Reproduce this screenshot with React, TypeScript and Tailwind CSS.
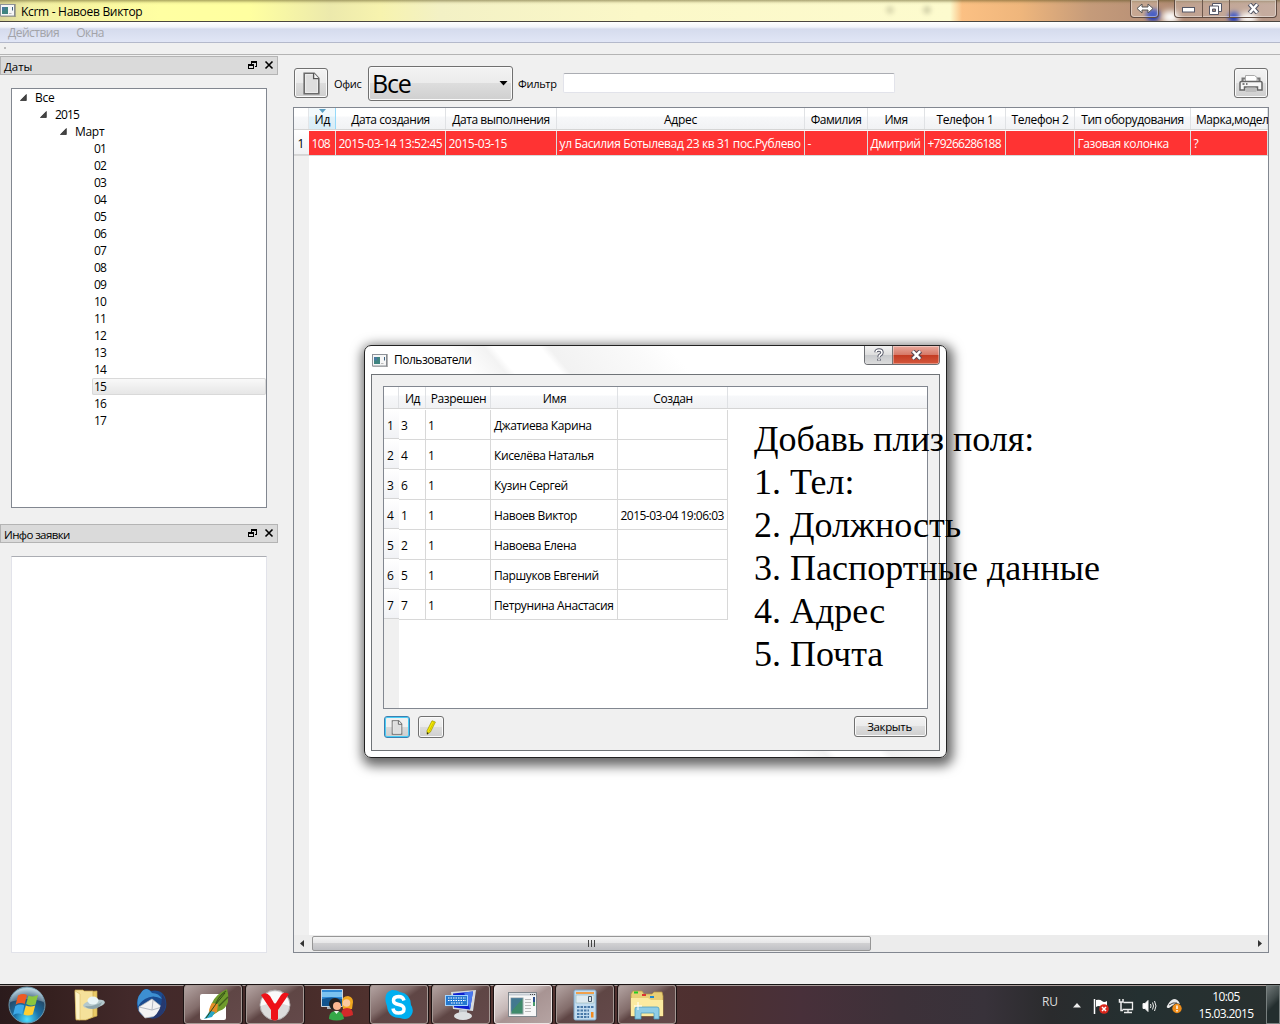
import React from "react";

const days = ["01", "02", "03", "04", "05", "06", "07", "08", "09", "10", "11", "12", "13", "14", "15", "16", "17"];

const orderCols = [
  { w: "w-[27px]", head: "Ид", cell: "108", ht: "pl-px", ct: "tracking-[-0.7px]" },
  { w: "w-[110px]", head: "Дата создания", cell: "2015-03-14 13:52:45", ht: "tracking-[-0.45px]", ct: "tracking-[-0.5px]" },
  { w: "w-[111px]", head: "Дата выполнения", cell: "2015-03-15", ht: "tracking-[-0.45px]", ct: "tracking-[-0.42px]" },
  { w: "w-[248px]", head: "Адрес", cell: "ул Басилия Ботылевад 23 кв 31 пос.Рублево", ht: "tracking-[-0.3px]", ct: "tracking-[-0.36px]" },
  { w: "w-[63px]", head: "Фамилия", cell: "-", ht: "tracking-[-0.45px]", ct: "" },
  { w: "w-[57px]", head: "Имя", cell: "Дмитрий", ht: "tracking-[-0.45px]", ct: "tracking-[-0.4px]" },
  { w: "w-[81px]", head: "Телефон 1", cell: "+79266286188", ht: "tracking-[-0.35px]", ct: "tracking-[-0.75px]" },
  { w: "w-[69px]", head: "Телефон 2", cell: "", ht: "tracking-[-0.35px]", ct: "" },
  { w: "w-[116px]", head: "Тип оборудования", cell: "Газовая колонка", ht: "tracking-[-0.42px]", ct: "tracking-[-0.4px]" },
  { w: "w-[77px]", head: "Марка,модел", cell: "?", ht: "tracking-[-0.45px] pl-[5px]", ct: "" },
];

const users = [
  ["3", "Джатиева Карина", ""],
  ["4", "Киселёва Наталья", ""],
  ["6", "Кузин Сергей", ""],
  ["1", "Навоев Виктор", "2015-03-04 19:06:03"],
  ["2", "Навоева Елена", ""],
  ["5", "Паршуков Евгений", ""],
  ["7", "Петрунина Анастасия", ""],
];

const note = ["Добавь плиз поля:", "1. Тел:", "2. Должность", "3. Паспортные данные", "4. Адрес", "5. Почта"];

const HEAD_BG = "bg-[linear-gradient(#fff_0%,#fff_40%,#f7f8fa_41%,#f1f2f4_100%)]";
const BTN =
  "flex items-center justify-center rounded-[3px] border border-[#707070] bg-[linear-gradient(#f3f3f3_0%,#ebebeb_49%,#dddddd_50%,#cfcfcf_100%)] shadow-[inset_0_0_0_1px_#fafafa]";

function AppIcon() {
  return (
    <svg width="16" height="13" viewBox="0 0 16 13" className="shrink-0">
      <rect x="0.5" y="0.5" width="14" height="11.5" fill="#f6f6f6" stroke="#8d9299" />
      <path d="M15.2 0V13H1" fill="none" stroke="#777" strokeWidth="0.8" />
      <rect x="2" y="3" width="6" height="7" fill="#3f8480" />
      <rect x="2" y="3" width="3" height="3.5" fill="#4778a0" />
      <path d="M9 9.500h2.500" stroke="#bbb" />
      <path d="M12.500 3v3.500" stroke="#3c6180" />
    </svg>
  );
}

function PageIcon({ w, h }: { w: number; h: number }) {
  return (
    <svg width={w} height={h} viewBox="0 0 17 23">
      <path d="M1.2 1.2h10l4.6 5v15.6H1.2z" fill="#dedede" stroke="#6c6c6c" strokeWidth="1.6" />
      <path d="M2.6 2.6h8v4.5h3.8v13.3H2.6z" fill="none" stroke="#ededed" />
      <path d="M10.6 1v5.6h5.2" fill="#f7f7f7" stroke="#555" strokeWidth="1.3" />
    </svg>
  );
}

function DockTitle({ text, track }: { text: string; track: string }) {
  return (
    <div className="flex h-[19px] w-[278px] items-center border border-[#b4b4b4] bg-[#dadada] pl-[3px] pr-[3px] text-[11.5px] text-black">
      <span className={"relative top-px flex-1 leading-[16px] " + track}>{text}</span>
      <svg width="26" height="11" viewBox="0 0 26 11" fill="none" stroke="#000" shapeRendering="crispEdges">
        <path d="M3.5 4.500v-3h5v5h-2M3 2.500h6" />
        <path d="M0.500 4.500h5v4h-5zM0 5.500h6" />
        <path d="M17.5 1.5l7 7M24.5 1.5l-7 7" strokeWidth="1.6" shapeRendering="auto" />
      </svg>
    </div>
  );
}

function Expander() {
  return (
    <svg width="7" height="7" viewBox="0 0 7 7" className="shrink-0">
      <path d="M6.3 0.5v6H0.4z" fill="#444" stroke="#222" strokeWidth="0.7" />
    </svg>
  );
}

function TreePanel() {
  return (
    <div className="ml-[11px] mt-[13px] h-[420px] w-[256px] border border-[#828790] bg-white text-[12px] leading-[17px] tracking-[-0.3px]">
      <div className="flex h-[17px] items-center gap-[8px] pl-[8px]"><Expander /><span>Все</span></div>
      <div className="flex h-[17px] items-center gap-[8px] pl-[28px]"><Expander /><span className="tracking-[-0.9px]">2015</span></div>
      <div className="flex h-[17px] items-center gap-[8px] pl-[48px]"><Expander /><span>Март</span></div>
      {days.map((d) => (
        <div
          key={d}
          className={
            "ml-[80px] h-[17px] rounded-[2px] pl-[2px] tracking-[-0.9px] " +
            (d === "15" ? "bg-[linear-gradient(#fafafa,#e5e5e5)] shadow-[inset_0_0_0_1px_#d9d9d9]" : "")
          }
        >
          {d}
        </div>
      ))}
    </div>
  );
}

function Toolbar() {
  return (
    <div className="flex h-[52px] items-center pl-[294px] pr-[12px] pt-[4px] text-[11px]">
      <div className={BTN + " h-[30px] w-[34px]"}><PageIcon w={17} h={23} /></div>
      <span className="relative top-[1px] ml-[6px] w-[34px] tracking-[-0.3px]">Офис</span>
      <div className={BTN + " mt-px h-[35px] w-[145px] !justify-between pl-[3px] pr-[4px]"}>
        <span className="relative -top-px text-[25px] leading-[30px] tracking-[-1.2px]">Все</span>
        <svg width="9" height="5" viewBox="0 0 9 5"><path d="M0.5 0h8L4.5 4.6z" fill="#000" /></svg>
      </div>
      <span className="relative top-[1px] ml-[5px] w-[45px] tracking-[-0.3px]">Фильтр</span>
      <div className="h-[20px] w-[332px] rounded-[2px] border border-[#e2e3ea] border-t-[#abadb3] bg-white" />
      <div className="flex-1" />
      <div className={BTN + " h-[30px] w-[34px]"}>
        <svg width="24" height="19" viewBox="0 0 24 19">
          <path d="M3.5 9V4.5h17V9" fill="none" stroke="#777" strokeWidth="2" />
          <path d="M6.5 7.5v-6h9l2.5 2v4z" fill="#fff" stroke="#aaa" />
          <path d="M1 8.5q0-1 1.5-1h19q1.500 0 1.500 1V16h-4.500v-3h-13v3H1z" fill="#f7f7f7" stroke="#666" strokeWidth="1.5" />
          <path d="M3.5 10h2M7 10h1.5" stroke="#555" strokeWidth="1.5" />
          <path d="M7.5 13.5h9l1 4.5h-11z" fill="#bcbcbc" />
        </svg>
      </div>
    </div>
  );
}

function OrdersTable() {
  return (
    <div className="ml-[15px] flex h-[846px] w-[976px] flex-col overflow-hidden border border-[#828790] bg-white text-[12px]">
      <div className="flex h-[22px] shrink-0 border-b border-[#d5d5d5]">
        <div className={"w-[15px] shrink-0 border-r border-[#e3e5e8] " + HEAD_BG} />
        {orderCols.map((c, i) => (
          <div
            key={c.head}
            className={
              "relative flex shrink-0 items-center whitespace-nowrap border-r pt-[2px] leading-[16px] " +
              c.w + " " + c.ht + " " +
              (i === 9 ? "" : "justify-center ") +
              (i === 0 ? "border-[#96d9f9] bg-[linear-gradient(#f2f9fc_40%,#e1f1f9_41%,#d8ecf6)]" : "border-[#e0e2e5] " + HEAD_BG)
            }
          >
            {i === 0 && (
              <svg className="absolute left-[10px] top-[1px]" width="7" height="4" viewBox="0 0 7 4"><path d="M0 0h7L3.5 4z" fill="#5c9fc2" /></svg>
            )}
            {c.head}
          </div>
        ))}
      </div>
      <div className="flex h-[25px] shrink-0 pt-px">
        <div className="w-[15px] shrink-0 border-b border-[#d5d5d5] bg-[linear-gradient(#fff,#f1f2f4)] pr-px text-center leading-[26px]">1</div>
        {orderCols.map((c) => (
          <div
            key={c.head}
            className={"shrink-0 overflow-hidden whitespace-nowrap border-r border-[#dcdcdc] bg-[#ff3333] pl-[2.5px] leading-[26px] text-white " + c.w + " " + c.ct}
          >
            {c.cell}
          </div>
        ))}
      </div>
      <div className="flex-1 border-t border-[#d8d8d8] bg-white"><div className="h-full w-[15px] bg-[#f0f0f0]" /></div>
      <div className="flex h-[17px] shrink-0 items-center bg-[#ececec]">
        <svg width="18" height="9" viewBox="0 0 18 9"><path d="M10 1v7L6 4.5z" fill="#333" /></svg>
        <div className="flex h-[15px] w-[559px] items-center justify-center gap-[2px] rounded-[2px] border border-[#969696] bg-[linear-gradient(#f4f4f4_0%,#e6e6e7_45%,#d0d0d2_50%,#bfc0c4_100%)]">
          <i className="h-[7px] w-px bg-[#444]" /><i className="h-[7px] w-px bg-[#444]" /><i className="h-[7px] w-px bg-[#444]" />
        </div>
        <div className="flex-1" />
        <svg width="14" height="9" viewBox="0 0 14 9"><path d="M4 1v7l4-3.5z" fill="#333" /></svg>
      </div>
    </div>
  );
}

const userCols = ["w-[27px]", "w-[65px]", "w-[127px]", "w-[110px]"];

function UsersDialog() {
  return (
    <div className="absolute left-[364px] top-[345px] h-[413px] w-[583px] rounded-[7px] border-[1.5px] border-[#222] bg-[linear-gradient(50deg,#fff_0%,#fff_46%,#f3f3f3_50%,#fff_51%,#fff_56%,#f2f2f2_57%,#fafafa_66%,#fff_70%)] text-[12px] shadow-[2px_4px_12px_4px_rgba(0,0,0,0.6)]">
      <div className="flex h-[28px]">
        <div className="flex flex-1 items-center gap-[6px] pl-[7px]">
          <AppIcon />
          <span className="tracking-[-0.5px]">Пользователи</span>
        </div>
        <div className="mr-[6px] flex h-[19px] overflow-hidden rounded-b-[4px] border border-t-0 border-[#6c6e72]">
          <div className="flex w-[28px] items-center justify-center border-r border-[#777] bg-[linear-gradient(#f3f3f3_0%,#dedede_48%,#c7c9cc_50%,#dcdcdc_100%)]">
            <svg width="10" height="14" viewBox="0 0 10 14" fill="none">
              <path d="M2 4.2Q2 2 5 2t3 2.6Q8 6 6.5 6.8 5 7.5 5 9.2M5 10.7v2" stroke="#555766" strokeWidth="3.4" />
              <path d="M2 4.2Q2 2 5 2t3 2.6Q8 6 6.5 6.8 5 7.5 5 9.2M5 10.9v1.6" stroke="#fff" strokeWidth="1.5" />
            </svg>
          </div>
          <div className="flex w-[46px] items-center justify-center bg-[linear-gradient(#e9a99d_0%,#d77a68_48%,#c33b22_50%,#d4573c_100%)] shadow-[inset_0_0_0_1px_rgba(255,255,255,0.35)]">
            <svg width="13" height="10" viewBox="0 0 13 10" fill="none">
              <path d="M2.5 1l8 8M10.5 1l-8 8" stroke="#5c4a55" strokeWidth="4.6" />
              <path d="M2.8 1.2l7.4 7.6M10.2 1.2L2.8 8.8" stroke="#fff" strokeWidth="2.4" />
            </svg>
          </div>
        </div>
      </div>
      <div className="ml-[6px] flex h-[377px] w-[569px] flex-col border border-[#6f7377] bg-[#f0f0f0] pl-[11px] pt-[11px]">
        <div className="h-[323px] w-[545px] border border-[#828790] bg-white">
          <div className={"flex h-[22px] border-b border-[#d5d5d5] leading-[24px] " + HEAD_BG}>
            <div className="w-[15px] border-r border-[#e0e2e5]" />
            {["Ид", "Разрешен", "Имя", "Создан"].map((h, i) => (
              <div key={h} className={"whitespace-nowrap border-r border-[#dfe1e4] pl-px text-center tracking-[-0.4px] " + userCols[i]}>{h}</div>
            ))}
          </div>
          <div className="flex h-[299px]">
            <div className="w-[15px] bg-[#f0f0f0]">
              {users.map((u, i) => (
                <div key={u[1]} className="h-[30px] border-b border-[#d5d5d5] bg-[linear-gradient(#fff,#f1f2f5)] pr-[2px] text-center leading-[34px]">{i + 1}</div>
              ))}
            </div>
            <div className="pt-px">
              {users.map((u) => (
                <div key={u[1]} className="flex h-[30px] leading-[31px]">
                  {[u[0], "1", u[1], u[2]].map((v, i) => (
                    <div
                      key={i}
                      className={
                        "whitespace-nowrap border-b border-r border-[#d8d8d8] " + userCols[i] +
                        (i === 3 ? " pl-[2.5px] tracking-[-0.52px]" : i === 2 ? " pl-[3px] tracking-[-0.4px]" : " pl-[2px]")
                      }
                    >
                      {v}
                    </div>
                  ))}
                </div>
              ))}
            </div>
          </div>
        </div>
        <div className="mt-[7px] flex pl-[1px]">
          <div className="flex h-[22px] w-[26px] items-center justify-center rounded-[3px] border border-[#3c7fb1] bg-[linear-gradient(#f0f0f0_49%,#dadada_50%,#cfcfcf)] shadow-[inset_0_0_0_1px_#48cdf5]"><PageIcon w={12} h={15} /></div>
          <div className={BTN + " ml-[8px] h-[22px] w-[26px]"}>
            <svg width="10" height="15" viewBox="0 0 10 15">
              <path d="M6 0.800l3.4 1.2-5 10.100L1 14.2V10.8z" fill="#f8ec00" stroke="#9a9000" strokeWidth="0.7" />
              <path d="M1 12.2l1.8.8L1 14.4z" fill="#222" />
              <path d="M7.8 2.2L3 11.5" stroke="#d0c400" />
            </svg>
          </div>
          <div className={BTN + " ml-[410px] h-[21px] w-[73px] pr-[2px] pt-px text-[11.5px] tracking-[-0.35px]"}>Закрыть</div>
        </div>
      </div>
    </div>
  );
}

function TitleBar() {
  return (
    <div className="relative h-[22px] shrink-0 overflow-hidden border-b border-[#4a4640] bg-[linear-gradient(90deg,#d9d59a_0,#f3f0a6_30px,#f6f3a0_60px,#ffffa2_160px,#ffffa0_250px,#ece9ac_330px,#f7f3ae_380px,#f3f1c5_440px,#fbf8c8_640px,#fdfbce_950px,#fbc083_962px,#efb67c_1020px,#c59b7a_1090px,#b08a74_1180px,#b89a8a_1280px)]">
      <div className="absolute inset-0 bg-[linear-gradient(rgba(90,80,30,0.5)_0,rgba(120,110,50,0.08)_3px,transparent_5px)]" />
      <div className="absolute left-[1146px] top-[9px] h-[12px] w-[14px] rounded-full bg-[#1c38b8] blur-[2px]" />
      <div className="absolute left-[1162px] top-[11px] h-[12px] w-[17px] rounded-full bg-white blur-[3px]" />
      <div className="absolute left-[1228px] top-[12px] h-[10px] w-[12px] rounded-full bg-[#1c38b8] blur-[2px]" />
      <div className="absolute left-[1240px] top-[13px] h-[10px] w-[17px] rounded-full bg-white blur-[3px]" />
      <div className="absolute left-[886px] top-[6px] h-[8px] w-[8px] rounded-full bg-[#dcdab0] blur-[2px]" />
      <div className="absolute left-[923px] top-[6px] h-[8px] w-[8px] rounded-full bg-[#d6d4ac] blur-[2px]" />
      <div className="relative flex h-full">
        <div className="flex flex-1 items-center gap-[5px] text-[12px]">
          <AppIcon />
          <span className="relative top-px tracking-[-0.3px]">Kcrm - Навоев Виктор</span>
        </div>
        <div className="mr-[15px] flex h-[18px] w-[29px] items-center justify-center rounded-b-[4px] border border-t-0 border-[#5f4b41] bg-white/20 shadow-[inset_0_0_0_1px_rgba(255,255,255,0.4)]">
          <svg width="18" height="11" viewBox="0 0 18 11"><path d="M1 5.5L6 1v3h6V1l5 4.5L12 10V7H6v3z" fill="#fff" stroke="#555" /></svg>
        </div>
        <div className="mr-[3px] flex h-[18px] rounded-b-[4px] border border-t-0 border-[#5f4b41] bg-white/20 shadow-[inset_0_0_0_1px_rgba(255,255,255,0.4)]">
          <div className="flex w-[28px] items-center justify-center border-r border-[#6d584d] pt-[2px]">
            <svg width="13" height="6" viewBox="0 0 13 6"><rect x="0.5" y="0.5" width="12" height="4.5" fill="#fff" stroke="#555766" /></svg>
          </div>
          <div className="flex w-[27px] items-center justify-center border-r border-[#6d584d] pr-[2px]">
            <svg width="13" height="12" viewBox="0 0 13 12" stroke="#555766">
              <path d="M3.5 0.5h9v8h-9z" fill="#fff" />
              <path d="M0.500 3h9v8.5h-9z" fill="#fff" /><path d="M3.5 6h3v2.5h-3z" fill="#a58b7d" />
            </svg>
          </div>
          <div className="flex w-[46px] items-center justify-center">
            <svg width="13" height="11" viewBox="0 0 13 11" fill="none">
              <path d="M2.5 1l8 9M10.5 1l-8 9" stroke="#555766" strokeWidth="4.6" />
              <path d="M2.8 1.2l7.4 8.6M10.2 1.2L2.8 9.8" stroke="#fff" strokeWidth="2.5" />
            </svg>
          </div>
        </div>
      </div>
    </div>
  );
}

const icons: Record<string, React.ReactNode> = {
  start: (
    <svg width="40" height="38" viewBox="0 0 40 38">
      <defs>
        <radialGradient id="orb" cx="50%" cy="90%" r="85%"><stop offset="0" stopColor="#4fe0ff" /><stop offset="0.4" stopColor="#1b74ab" /><stop offset="0.75" stopColor="#234c6c" /><stop offset="1" stopColor="#9fc3d4" /></radialGradient>
      </defs>
      <circle cx="20" cy="19" r="18" fill="url(#orb)" stroke="#6d98ac" />
      <path d="M3 16Q5 3 20 2t17 14q-16-6-34 0z" fill="#fff" opacity="0.28" />
      <path d="M11 9.500q5-2.500 9-.5l-2.300 9q-4-2-9 .5z" fill="#ee5a24" />
      <path d="M21.500 9.500q4.500 2 9.500-.5l-2.500 9.500q-5 2-9.300-.5z" fill="#8cc63f" />
      <path d="M8.300 20q5-2.500 9-.5l-2.300 9q-4-2-9 .5z" fill="#3da9e8" />
      <path d="M18.800 19.500q4.500 2 9.400 0l-2.400 9q-5 2-9.300 0z" fill="#ffcf32" />
    </svg>
  ),
  folder: (
    <svg width="32" height="34" viewBox="0 0 32 34">
      <path d="M12 4l12-1v25l-10 3z" fill="#e9c965" stroke="#c9a84e" strokeWidth="0.7" />
      <path d="M2 2h8l1 1h9v26l-7 3H3z" fill="#f5e19a" stroke="#c9a84e" strokeWidth="0.7" />
      <path d="M2 3l5 3v26l-4-1z" fill="#fdf3c6" stroke="#d4b65e" strokeWidth="0.5" />
      <ellipse cx="21" cy="16" rx="11" ry="4" fill="#b4c8cc" transform="rotate(-10 21 16)" />
      <ellipse cx="20" cy="12.500" rx="5.500" ry="4" fill="#e8f4f6" />
      <path d="M12 18q9 1 17-4-2 7-9 7-6 0-8-3z" fill="#8ea6ad" />
    </svg>
  ),
  mail: (
    <svg width="34" height="34" viewBox="0 0 34 34">
      <path d="M7 5q2-4 6-4 2 0 4 2 10-2 14 6 4 12-4 18-8 6-18 1-7-5-6-14 1-6 4-9z" fill="#1b4b8f" />
      <path d="M7 5q2-4 6-4 3 1 5 4 7 0 10 6-9-5-17 0-5 3-7 8-2-9 3-14z" fill="#3d8fd1" />
      <path d="M5 19l13-8 10 8-5 9-12 2-6-7z" fill="#f3f3f3" stroke="#bbb" strokeWidth="0.7" />
      <path d="M5 19l13 3 1-10M18 22l10-3" stroke="#b7bcc4" fill="none" />
      <path d="M28 6q7 9 1 19-4 6-12 6 12-8 11-25z" fill="#26396f" />
    </svg>
  ),
  feather: (
    <svg width="34" height="32" viewBox="0 0 34 32">
      <rect x="4" y="5" width="26" height="26" rx="2" fill="#fff" />
      <path d="M31 0q2 6 1 13-2 7-9 9l-9 6q-1-7 2-14 4-9 15-14z" fill="#6f9a2c" />
      <path d="M30 2q-9 6-12 18M32 8l-9 9" stroke="#3f5f1a" fill="none" strokeWidth="1.400" />
      <path d="M16 14l6 1-1 8-8 4q-1-7 3-13z" fill="#e58d25" />
      <path d="M14 22l5 1-3 5-8 2z" fill="#27a5c8" />
      <path d="M29 4Q20 14 10 29" stroke="#304b16" fill="none" strokeWidth="1" />
    </svg>
  ),
  yandex: (
    <svg width="32" height="32" viewBox="0 0 32 32">
      <circle cx="16" cy="16" r="15" fill="#dcdcdc" stroke="#a9a4a4" />
      <path d="M1.500 17A14.500 14.500 0 0130.500 17q-14-6-29 0z" fill="#fafafa" />
      <path d="M2 6q5-4 9 1l4 7q1 1 2 0l5-8q3-4 8-1l-11 16v9q-3 3-7 0v-9z" fill="#ee1118" />
    </svg>
  ),
  people: (
    <svg width="34" height="34" viewBox="0 0 34 34">
      <path d="M1.500 1.500h21v17h-21z" fill="#2f8ad6" stroke="#ced5dc" />
      <path d="M2 4h20v5H2z" fill="#7cc3f0" /><path d="M2 11q9-3 20 0v7H2z" fill="#12548f" /><path d="M7 19h8v2H7z" fill="#a8b0b8" />
      <path d="M22 14q0-6 6-6 5 1 5 6l-1 7h-9z" fill="#f2a81f" /><circle cx="26.500" cy="15" r="3.800" fill="#fbc9a0" />
      <path d="M21 28q0-8 6-8t6 7q-6 3-12 1z" fill="#d42a2a" />
      <circle cx="15" cy="16" r="6" fill="#26211f" /><circle cx="17" cy="18" r="4" fill="#fcb791" />
      <path d="M9 31q0-8 7-8t8 8q-7 3-15 0z" fill="#35a847" />
      <path d="M14 23l2.500 3 2.500-3z" fill="#e8f5e9" />
    </svg>
  ),
  skype: (
    <svg width="32" height="32" viewBox="0 0 32 32">
      <path d="M9 1q5 0 8 2 11 2 11 13 3 4 1 9-3 7-12 4Q5 29 4 17-1 4 9 1z" fill="#00aff0" />
      <path d="M21 11.500q-1-4-5.500-4-5 .2-5 4 0 3 5 4 5.500 1 5.500 4.500 0 4-5.500 4-5 0-5.500-4.500" fill="none" stroke="#fff" strokeWidth="3.500" />
    </svg>
  ),
  monitor: (
    <svg width="34" height="34" viewBox="0 0 34 34">
      <path d="M7 4l25-2-3 21-20-2z" fill="#d6dadd" />
      <path d="M9 5.500l20-2-3 18-16-2z" fill="#0c1fd0" /><path d="M20 4.500l9-1-3 18z" fill="#4779ef" />
      <rect x="1.500" y="7.500" width="22" height="10" fill="#2478cf" stroke="#a4d5ff" />
      <path d="M4 10h18M4 12.500h18M7 15h12" stroke="#fff" strokeDasharray="1.500 1" />
      <path d="M15 22h8v4h-8z" fill="#bfc4c8" /><ellipse cx="19" cy="28" rx="9" ry="4" fill="#dcdfe1" />
    </svg>
  ),
  form: (
    <svg width="30" height="26" viewBox="0 0 30 26">
      <rect x="0.5" y="0.5" width="28" height="24" fill="#f7f7f7" stroke="#80868c" />
      <path d="M1 2.500h27" stroke="#c5ccd3" strokeWidth="2" /><path d="M22 2.500h5" stroke="#444" strokeDasharray="1 1" />
      <rect x="3" y="6" width="12" height="16" fill="#3f8a6a" stroke="#9aa" /><path d="M3 6h12L3 20z" fill="#4672a0" opacity="0.7" />
      <path d="M17 7.500h6M17 10.500h6M17 13.500h6M17 16.500h6M17 19.500h6" stroke="#bbb" />
      <path d="M26 5v5" stroke="#284e8c" strokeWidth="2" /><path d="M26 10v4" stroke="#4a9c6c" strokeWidth="2" />
    </svg>
  ),
  calc: (
    <svg width="24" height="32" viewBox="0 0 24 32">
      <rect x="1" y="1" width="22" height="30" rx="1.500" fill="#c2dcf0" stroke="#7ba4c4" />
      <rect x="3" y="3" width="18" height="2" fill="#f0a04b" />
      <rect x="3" y="6" width="18" height="8" fill="#deeaf0" stroke="#8aa" strokeWidth="0.500" />
      <path d="M15.500 7.500h3v5h-3z" fill="none" stroke="#456" />
      <path d="M4 18h17M4 21.500h12M4 25h12M4 28h12" stroke="#4979a8" strokeWidth="2.200" strokeDasharray="2.500 1" />
      <rect x="18" y="23" width="2.500" height="5.500" fill="#f28a20" />
    </svg>
  ),
  explorer: (
    <svg width="34" height="32" viewBox="0 0 34 32">
      <path d="M1 5l2-3h9l2 3h8l2-2h8l1 4v20H1z" fill="#e8cf76" stroke="#b89a45" strokeWidth="0.700" />
      <path d="M4 3.500h4" stroke="#2c2" strokeWidth="2" /><path d="M12 6h4" stroke="#d33" strokeWidth="2" /><path d="M20 8h4" stroke="#28c" strokeWidth="2" />
      <path d="M1 9h17l3 2h12v16H1z" fill="#fbeaa0" />
      <path d="M5 30V20q0-2 2-2h20q2 0 2 2v10h-5v-6H11v6z" fill="#8fcde6" stroke="#4b9dbf" strokeWidth="0.800" />
      <path d="M8 13v8M4 17h8" stroke="#fff" />
    </svg>
  ),
};

const tasks = [
  { id: "folder", mode: "" }, { id: "mail", mode: "" }, { id: "feather", mode: "open" }, { id: "yandex", mode: "open" },
  { id: "people", mode: "" }, { id: "skype", mode: "open" }, { id: "monitor", mode: "open" }, { id: "form", mode: "active" },
  { id: "calc", mode: "open" }, { id: "explorer", mode: "open" },
];

function Taskbar() {
  return (
    <div className="flex h-[40px] shrink-0 border-t border-[#151515] bg-[linear-gradient(90deg,#2b1b1c_0,#35201f_50px,#42292a_130px,#472c2a_300px,#573632_430px,#4e3030_700px,#48303a_800px,#3d3139_900px,#38323a_985px,#2a2b2d_1050px,#243031_1140px,#29302f_1280px)] font-['Open_Sans','Noto_Sans',sans-serif] text-[12px] text-white shadow-[inset_0_1px_0_#a89b98]">
      <div className="flex w-[53px] items-center justify-center">{icons.start}</div>
      <div className="ml-[7px] flex gap-[4px]">
        {tasks.map((t) => (
          <div
            key={t.id}
            className={
              "flex h-[39px] w-[58px] items-center justify-center rounded-[3px] " +
              (t.mode === "open"
                ? "border border-[#a59894] bg-[linear-gradient(145deg,#b3a3a1_0%,#836d6b_38%,#5f4645_50%,#64494a_100%)] shadow-[0_0_0_1px_#1b1213]"
                : t.mode === "active"
                ? "border border-[#ece5e4] bg-[linear-gradient(145deg,#e9e2e1_0%,#c5b7b6_40%,#a89493_52%,#b5a3a2_100%)] shadow-[0_0_0_1px_#1b1213]"
                : "")
            }
          >
            {icons[t.id]}
          </div>
        ))}
      </div>
      <div className="flex-1" />
      <span className="mr-[15px] mt-[8px] tracking-[-0.1px] text-[#ddd]">RU</span>
      <div className="mr-[9px] flex items-center gap-[8px] pt-[2px]">
        <svg width="8" height="5" viewBox="0 0 8 5" className="mr-[4px]"><path d="M4 0l4 4.500H0z" fill="#eee" /></svg>
        <svg width="17" height="16" viewBox="0 0 17 16">
          <path d="M1.500 1v15" stroke="#fff" strokeWidth="1.500" /><path d="M3 2q4-1 6 1t5 0v7q-4 1-6-1t-5 0z" fill="#fff" />
          <circle cx="11" cy="11" r="4.800" fill="#d9271c" /><path d="M9 9l4 4M13 9l-4 4" stroke="#fff" strokeWidth="1.500" />
        </svg>
        <svg width="16" height="16" viewBox="0 0 16 16" fill="none" stroke="#eee">
          <path d="M5.500 4.500h9v7H4.500M10 12v2M6 14.500h8" strokeWidth="1.300" /><path d="M1.500 1v3h3.500V1M3 4v8.500h2" strokeWidth="1.500" />
        </svg>
        <svg width="16" height="14" viewBox="0 0 16 14" fill="none" stroke="#eee">
          <path d="M1 4.500h2L6 1.500v11L3 9.500H1z" fill="#fff" /><path d="M8.500 5q1 2 0 4M10.500 3.500q2 3.500 0 7M12.500 2q3 5 0 10" />
        </svg>
        <svg width="17" height="16" viewBox="0 0 17 16">
          <path d="M1 8Q4 2 8 1q4 0 6 5l-4-1-7 5q-3 0-2-2z" fill="#e8e8e8" /><path d="M3 7q4-3 8-2" stroke="#444" fill="none" />
          <circle cx="11" cy="10.500" r="4.700" fill="#ef8d1a" /><path d="M11 7.500v3.500M11 12v1.500" stroke="#fff" strokeWidth="1.500" />
        </svg>
      </div>
      <div className="flex w-[70px] flex-col items-center pt-[3px] pr-[2px] leading-[17px] tracking-[-0.6px]">
        <span>10:05</span><span>15.03.2015</span>
      </div>
      <div className="ml-[4px] h-full w-[14px] border border-[#78807f] bg-[linear-gradient(135deg,#707878_0%,#3e4848_40%,#232e2e_55%)]" />
    </div>
  );
}

export default function App() {
  return (
    <div className="relative flex h-[1024px] w-[1280px] flex-col overflow-hidden bg-[#f0f0f0] font-['Open_Sans','Noto_Sans',sans-serif] text-black">
      <TitleBar />
      <div className="flex h-[21px] shrink-0 items-center gap-[17px] border-b border-[#b4b9cb] bg-[linear-gradient(#fff_0,#f2f4fa_25%,#d5dbed_35%,#e1e6f6_100%)] pl-[8px] pt-[2px] text-[12px] tracking-[-0.5px] text-[#a2a3a8]">
        <span>Действия</span><span>Окна</span>
      </div>
      <div className="h-[12px] shrink-0 border-b border-[#b4b4b4] pl-[4px] pt-[4px]"><div className="h-[2px] w-[2px] bg-[#bbb]" /></div>
      <div className="flex h-[929px] shrink-0">
        <div className="w-[278px] shrink-0 pt-[1px]">
          <DockTitle text="Даты" track="tracking-[-0.05px]" />
          <TreePanel />
          <div className="h-[16px]" />
          <DockTitle text="Инфо заявки" track="tracking-[-0.6px]" />
          <div className="ml-[11px] mt-[13px] h-[397px] w-[256px] border border-[#e2e3ea] border-t-[#abadb3] bg-white" />
        </div>
        <div className="w-[1002px]">
          <div className="-ml-[278px]"><Toolbar /></div>
          <OrdersTable />
        </div>
      </div>
      <Taskbar />
      <UsersDialog />
      <div className="absolute left-[754px] top-[418px] whitespace-nowrap font-['Liberation_Serif',serif] text-[36px] leading-[43.1px]">
        {note.map((n) => <div key={n}>{n}</div>)}
      </div>
    </div>
  );
}
